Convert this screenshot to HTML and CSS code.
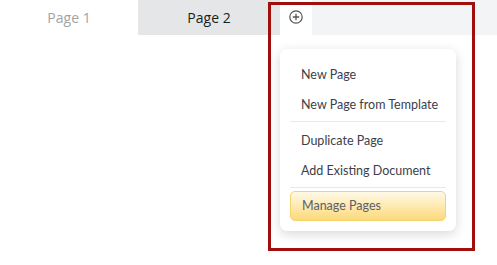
FILE: index.html
```html
<!DOCTYPE html>
<html lang="en">

<head>
    <meta charset="UTF-8">
    <meta name="viewport" content="width=device-width, initial-scale=1.0">
    <title>Pages</title>
    <link rel="stylesheet" href="styles.css">
</head>

<body>
    <div class="tabbar">
        <div class="tab">Page 1</div>
        <div class="tab active">Page 2</div>
        <div class="tab add">
            <svg width="14" height="14" viewBox="0 0 14 14">
                <circle cx="7" cy="7" r="6.2" fill="none" stroke="#555" stroke-width="1.2" />
                <path d="M7 3.8v6.4M3.8 7h6.4" stroke="#555" stroke-width="1.3" />
            </svg>
        </div>
        <div class="tab-fill"></div>
    </div>

    <div class="menu">
        <div class="menu-item">New Page</div>
        <div class="menu-item">New Page from Template</div>
        <div class="menu-sep"></div>
        <div class="menu-item">Duplicate Page</div>
        <div class="menu-item">Add Existing Document</div>
        <div class="menu-sep"></div>
        <div class="menu-item manage">Manage Pages</div>
    </div>

    <div class="highlight"></div>
</body>

</html>
```

FILE: styles.css
```css
body {
    margin: 0;
    font-family: "Open Sans", "Liberation Sans", sans-serif;
    background: white;
    position: relative;
    height: 265px;
    overflow: hidden;
}

.tabbar {
    display: flex;
    height: 35px;
}

.tab {
    width: 138px;
    display: flex;
    align-items: center;
    justify-content: center;
    font-size: 14px;
    color: #a3a3a3;
    background: white;
}

.tab.active {
    width: 142px;
    background: #e5e6e8;
    color: #1c1c1c;
}

.tab.add {
    width: 32px;
    padding-bottom: 1px;
    box-sizing: border-box;
}

.tab-fill {
    flex: 1;
    background: #f3f4f6;
}

.menu {
    position: absolute;
    left: 280px;
    top: 49px;
    width: 176px;
    box-sizing: border-box;
    padding: 11px 10px 10px;
    background: white;
    border-radius: 7px;
    box-shadow: 0 3px 12px rgba(0, 0, 0, 0.16);
}

.menu-item {
    height: 30px;
    line-height: 30px;
    padding-left: 11px;
    font-family: Lato, "Open Sans", sans-serif;
    font-size: 12.5px;
    color: #3b404b;
    white-space: nowrap;
}

.menu-sep {
    height: 1px;
    background: #e8e8ea;
    margin: 1px 0 4px;
}

.menu-sep + .menu-item + .menu-item + .menu-sep {
    margin-bottom: 3px;
}

.menu-item.manage {
    height: 28px;
    line-height: 28px;
    border: 1px solid #f5d46e;
    border-radius: 5px;
    background: linear-gradient(#fff9e6, #fcd97a);
    color: #5b606a;
}

.highlight {
    position: absolute;
    left: 268px;
    top: 2px;
    width: 201px;
    height: 243px;
    border: 3px solid #a00f0b;
}
```
